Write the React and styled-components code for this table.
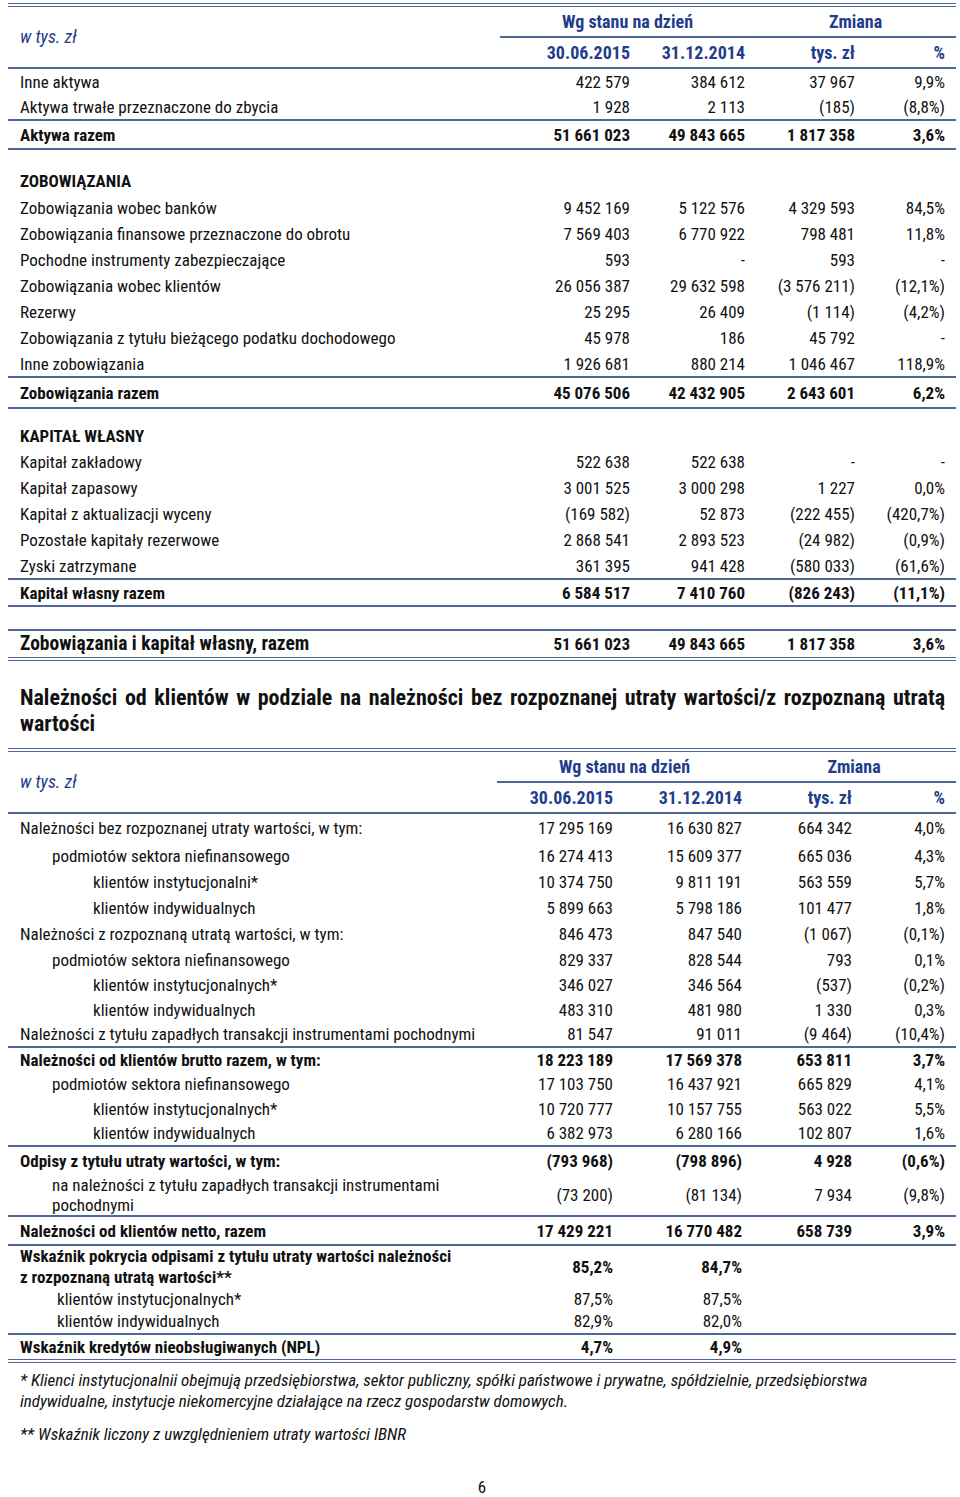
import React from "react";
import styled, { createGlobalStyle } from "styled-components";

const FONT = `"Roboto Condensed", Roboto, "Liberation Sans", Arial, sans-serif`;
const BLUE = "#1f3d8c";
const LINE = "#4f6796";

const Global = createGlobalStyle`
  html, body { margin: 0; padding: 0; background: #fff; }
  body { font-family: ${FONT}; font-stretch: condensed; color: #111; }
`;

const Page = styled.div`
  width: 960px;
  box-sizing: border-box;
  padding: 3px 4px 10px 8px;
`;

const Table = styled.table`
  width: 948px;
  border-collapse: collapse;
  table-layout: fixed;
  font-size: 17px;
  line-height: 20px;
  border-top: 4px double ${LINE};
  margin-top: ${(p) => p.$mt || 0}px;
`;

const HeadLabel = styled.th`
  text-align: left;
  font-style: italic;
  font-weight: normal;
  color: ${BLUE};
  font-size: 18px;
  padding-left: 12px;
  vertical-align: middle;
  border-bottom: 2px solid ${LINE};
`;

const GroupHead = styled.th`
  text-align: center;
  font-weight: bold;
  color: ${BLUE};
  font-size: 18px;
  height: 29px;
  padding: 0;
  border-bottom: 2px solid ${LINE};
`;

const SubHead = styled.th`
  text-align: right;
  font-weight: bold;
  color: ${BLUE};
  font-size: 18px;
  height: 29px;
  padding: 0 ${(p) => (p.$last ? 11 : 10)}px 0 0;
  border-bottom: 2px solid ${LINE};
`;

const Tr = styled.tr`
  height: ${(p) => p.$h || 26}px;
  & > td {
    border-bottom: ${(p) =>
      p.$double ? `4px double ${LINE}` : p.$line ? `2px solid ${LINE}` : "none"};
    font-weight: ${(p) => (p.$bold ? "bold" : "normal")};
  }
`;

const Label = styled.td`
  text-align: left;
  padding: 0 0 ${(p) => p.$pb || 0}px ${(p) => 12 + (p.$indent || 0)}px;
  vertical-align: ${(p) => (p.$pb ? "bottom" : "middle")};
  font-size: ${(p) => p.$size || 17}px;
  line-height: ${(p) => p.$lh || 20}px;
  white-space: nowrap;
  overflow: visible;
`;

const Val = styled.td`
  text-align: right;
  padding: 0 ${(p) => (p.$last ? 11 : 10)}px 0 0;
  vertical-align: middle;
  white-space: nowrap;
`;

const Heading = styled.h2`
  margin: 24px 11px 0 12px;
  font-size: 22px;
  line-height: 26px;
  font-weight: bold;
  text-align: justify;
  color: #111;
`;

const Notes = styled.div`
  margin-top: 7px;
  padding: 0 40px 0 12px;
  font-style: italic;
  font-size: 17px;
  line-height: 21px;
`;

const Note = styled.p`
  margin: 0 0 12px 0;
`;

const PageNo = styled.div`
  text-align: center;
  font-size: 17px;
  margin-top: 32px;
`;

function Header({ widths }) {
  return (
    <>
      <colgroup>
        {widths.map((w, i) => (
          <col key={i} style={{ width: w }} />
        ))}
      </colgroup>
      <thead>
        <tr>
          <HeadLabel rowSpan={2}>w tys. zł</HeadLabel>
          <GroupHead colSpan={2}>Wg stanu na dzień</GroupHead>
          <GroupHead colSpan={2}>Zmiana</GroupHead>
        </tr>
        <tr>
          <SubHead>30.06.2015</SubHead>
          <SubHead>31.12.2014</SubHead>
          <SubHead>tys. zł</SubHead>
          <SubHead $last>%</SubHead>
        </tr>
      </thead>
    </>
  );
}

function Row({ r }) {
  const v = r.v || ["", "", "", ""];
  return (
    <Tr $h={r.h} $line={r.line} $double={r.double} $bold={r.bold}>
      <Label $indent={r.indent} $pb={r.pb} $size={r.size} $lh={r.lh}>
        {r.label}
      </Label>
      <Val>{v[0]}</Val>
      <Val>{v[1]}</Val>
      <Val>{v[2]}</Val>
      <Val $last>{v[3]}</Val>
    </Tr>
  );
}

const t1 = [
  { label: "Inne aktywa", v: ["422 579", "384 612", "37 967", "9,9%"] },
  { label: "Aktywa trwałe przeznaczone do zbycia", v: ["1 928", "2 113", "(185)", "(8,8%)"], line: true },
  { label: "Aktywa razem", v: ["51 661 023", "49 843 665", "1 817 358", "3,6%"], bold: true, line: true, h: 29 },
  { label: "ZOBOWIĄZANIA", bold: true, pb: 4, h: 46 },
  { label: "Zobowiązania wobec banków", v: ["9 452 169", "5 122 576", "4 329 593", "84,5%"] },
  { label: "Zobowiązania finansowe przeznaczone do obrotu", v: ["7 569 403", "6 770 922", "798 481", "11,8%"] },
  { label: "Pochodne instrumenty zabezpieczające", v: ["593", "-", "593", "-"] },
  { label: "Zobowiązania wobec klientów", v: ["26 056 387", "29 632 598", "(3 576 211)", "(12,1%)"] },
  { label: "Rezerwy", v: ["25 295", "26 409", "(1 114)", "(4,2%)"] },
  { label: "Zobowiązania z tytułu bieżącego podatku dochodowego", v: ["45 978", "186", "45 792", "-"] },
  { label: "Inne zobowiązania", v: ["1 926 681", "880 214", "1 046 467", "118,9%"], line: true },
  { label: "Zobowiązania razem", v: ["45 076 506", "42 432 905", "2 643 601", "6,2%"], bold: true, line: true, h: 31 },
  { label: "KAPITAŁ WŁASNY", bold: true, pb: 3, h: 41 },
  { label: "Kapitał zakładowy", v: ["522 638", "522 638", "-", "-"] },
  { label: "Kapitał zapasowy", v: ["3 001 525", "3 000 298", "1 227", "0,0%"] },
  { label: "Kapitał z aktualizacji wyceny", v: ["(169 582)", "52 873", "(222 455)", "(420,7%)"] },
  { label: "Pozostałe kapitały rezerwowe", v: ["2 868 541", "2 893 523", "(24 982)", "(0,9%)"] },
  { label: "Zyski zatrzymane", v: ["361 395", "941 428", "(580 033)", "(61,6%)"], line: true },
  { label: "Kapitał własny razem", v: ["6 584 517", "7 410 760", "(826 243)", "(11,1%)"], bold: true, line: true, h: 27 },
  { label: "", line: true, h: 24 },
  { label: "Zobowiązania i kapitał własny, razem", size: 19.5, v: ["51 661 023", "49 843 665", "1 817 358", "3,6%"], bold: true, double: true, h: 29 },
];

const t2 = [
  { label: "Należności bez rozpoznanej utraty wartości, w tym:", v: ["17 295 169", "16 630 827", "664 342", "4,0%"], h: 29 },
  { label: "podmiotów sektora niefinansowego", indent: 32, v: ["16 274 413", "15 609 377", "665 036", "4,3%"], h: 27 },
  { label: "klientów instytucjonalni*", indent: 73, v: ["10 374 750", "9 811 191", "563 559", "5,7%"] },
  { label: "klientów indywidualnych", indent: 73, v: ["5 899 663", "5 798 186", "101 477", "1,8%"] },
  { label: "Należności z rozpoznaną utratą wartości, w tym:", v: ["846 473", "847 540", "(1 067)", "(0,1%)"] },
  { label: "podmiotów sektora niefinansowego", indent: 32, v: ["829 337", "828 544", "793", "0,1%"], h: 25 },
  { label: "klientów instytucjonalnych*", indent: 73, v: ["346 027", "346 564", "(537)", "(0,2%)"], h: 25 },
  { label: "klientów indywidualnych", indent: 73, v: ["483 310", "481 980", "1 330", "0,3%"], h: 25 },
  { label: "Należności z tytułu zapadłych transakcji instrumentami pochodnymi", v: ["81 547", "91 011", "(9 464)", "(10,4%)"], line: true, h: 25 },
  { label: "Należności od klientów brutto razem, w tym:", v: ["18 223 189", "17 569 378", "653 811", "3,7%"], bold: true, h: 25 },
  { label: "podmiotów sektora niefinansowego", indent: 32, v: ["17 103 750", "16 437 921", "665 829", "4,1%"], h: 24 },
  { label: "klientów instytucjonalnych*", indent: 73, v: ["10 720 777", "10 157 755", "563 022", "5,5%"], h: 25 },
  { label: "klientów indywidualnych", indent: 73, v: ["6 382 973", "6 280 166", "102 807", "1,6%"], line: true, h: 25 },
  { label: "Odpisy z tytułu utraty wartości, w tym:", v: ["(793 968)", "(798 896)", "4 928", "(0,6%)"], bold: true, h: 28 },
  {
    label: (
      <>
        na należności z tytułu zapadłych transakcji instrumentami
        <br />
        pochodnymi
      </>
    ),
    indent: 32,
    v: ["(73 200)", "(81 134)", "7 934", "(9,8%)"],
    line: true,
    h: 42,
  },
  { label: "Należności od klientów netto, razem", v: ["17 429 221", "16 770 482", "658 739", "3,9%"], bold: true, line: true, h: 29 },
  {
    label: (
      <>
        Wskaźnik pokrycia odpisami z tytułu utraty wartości należności
        <br />z rozpoznaną utratą wartości**
      </>
    ),
    bold: true,
    lh: 21,
    v: ["85,2%", "84,7%", "", ""],
    h: 43,
  },
  { label: "klientów instytucjonalnych*", indent: 37, v: ["87,5%", "87,5%", "", ""], h: 21 },
  { label: "klientów indywidualnych", indent: 37, v: ["82,9%", "82,0%", "", ""], line: true, h: 25 },
  { label: "Wskaźnik kredytów nieobsługiwanych (NPL)", v: ["4,7%", "4,9%", "", ""], bold: true, double: true, h: 27 },
];

export default function App() {
  return (
    <Page>
      <Global />
      <Table>
        <Header widths={[492, 140, 115, 110, 91]} />
        <tbody>
          {t1.map((r, i) => (
            <Row key={i} r={r} />
          ))}
        </tbody>
      </Table>

      <Heading>
        Należności od klientów w podziale na należności bez rozpoznanej utraty wartości/z rozpoznaną utratą
        wartości
      </Heading>

      <Table $mt={11}>
        <Header widths={[489, 126, 129, 110, 94]} />
        <tbody>
          {t2.map((r, i) => (
            <Row key={i} r={r} />
          ))}
        </tbody>
      </Table>

      <Notes>
        <Note>
          * Klienci instytucjonalnii obejmują przedsiębiorstwa, sektor publiczny, spółki państwowe i prywatne,
          spółdzielnie, przedsiębiorstwa indywidualne, instytucje niekomercyjne działające na rzecz gospodarstw
          domowych.
        </Note>
        <Note>** Wskaźnik liczony z uwzględnieniem utraty wartości IBNR</Note>
      </Notes>

      <PageNo>6</PageNo>
    </Page>
  );
}
